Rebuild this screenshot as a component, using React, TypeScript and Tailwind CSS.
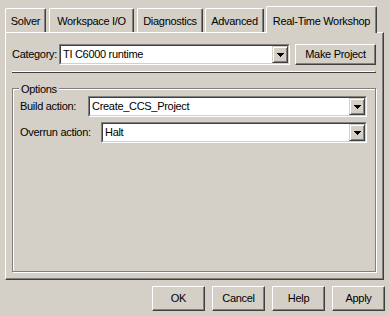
import React from 'react'

const TABS = [
  { label: 'Solver', w: 'w-[41px]', ml: 'ml-0' },
  { label: 'Workspace I/O', w: 'w-[85px]', ml: 'ml-[3px]' },
  { label: 'Diagnostics', w: 'w-[66px]', ml: 'ml-[3px]' },
  { label: 'Advanced', w: 'w-[59px]', ml: 'ml-[2px]' },
]

function Arrow() {
  return (
    <svg width="7" height="4" viewBox="0 0 7 4" shapeRendering="crispEdges">
      <path d="M0 0h7v1h-1v1h-1v1h-1v1h-1v-1h-1v-1h-1v-1h-1z" fill="#000" />
    </svg>
  )
}

function Combo({ value, className }: { value: string; className: string }) {
  return (
    <div className={`flex h-[21px] border border-t-[#808080] border-l-[#808080] border-b-white border-r-white ${className}`}>
      <div className="flex flex-1 border border-t-[#404040] border-l-[#404040] border-b-[#d4d0c8] border-r-[#d4d0c8] bg-white">
        <span className="flex-1 pl-[2px] leading-[17px] whitespace-nowrap overflow-hidden">{value}</span>
        <div className="flex w-[16px] items-center justify-center bg-[#d4d0c8] border border-t-[#d4d0c8] border-l-[#d4d0c8] border-b-[#404040] border-r-[#404040] shadow-[inset_1px_1px_#fff,inset_-1px_-1px_#808080]">
          <Arrow />
        </div>
      </div>
    </div>
  )
}

function Button({ label, className = '' }: { label: string; className?: string }) {
  return (
    <div className={`flex items-center justify-center bg-[#d4d0c8] border border-t-white border-l-white border-b-[#404040] border-r-[#404040] shadow-[inset_-1px_-1px_#808080] ${className}`}>
      {label}
    </div>
  )
}

export default function App() {
  return (
    <div className="w-[389px] h-[316px] bg-[#d4d0c8] text-black text-[11px] tracking-[-0.3px] font-['Liberation_Sans',Arial,sans-serif] overflow-hidden">
      {/* tabs */}
      <div className="flex items-end h-[32px] pl-[5px]">
        {TABS.map((t) => (
          <div key={t.label}
            className={`flex h-[24px] items-center justify-center pt-[1px] rounded-t-[2px] border-t border-l border-t-white border-l-white border-r border-r-[#404040] shadow-[inset_-1px_0_#808080] ${t.w} ${t.ml}`}>
            {t.label}
          </div>
        ))}
        <div className="relative z-10 -mb-px ml-[2px] flex h-[27px] w-[111px] items-start justify-center pt-[6px] bg-[#d4d0c8] rounded-t-[2px] border-t border-l border-t-white border-l-white border-r border-r-[#404040] shadow-[inset_-1px_0_#808080]">
          Real-Time Workshop
        </div>
      </div>

      {/* panel */}
      <div className="mx-[5px] h-[248px] border border-t-white border-l-white border-b-[#404040] border-r-[#404040] shadow-[inset_-1px_-1px_#808080] pl-[6px] pr-[7px] pt-[11px]">
        <div className="flex items-center h-[21px]">
          <span className="w-[47px] whitespace-nowrap">Category:</span>
          <Combo value="TI C6000 runtime" className="w-[231px]" />
          <Button label="Make Project" className="ml-auto w-[81px] h-[21px]" />
        </div>

        <div className="mt-[6px] h-[2px] border-t border-t-white border-b border-b-[#404040] border-r border-r-[#404040]" />

        <div className="relative mt-[15px] h-[184px] border border-[#808080] shadow-[inset_1px_1px_#fff,1px_1px_#fff] pl-[7px] pr-[8px] pt-[7px]">
          <span className="absolute -top-[8px] left-[6px] px-[2px] bg-[#d4d0c8]">Options</span>
          <div className="flex items-center">
            <span className="w-[68px] whitespace-nowrap">Build action:</span>
            <Combo value="Create_CCS_Project" className="flex-1" />
          </div>
          <div className="flex items-center mt-[5px]">
            <span className="w-[81px] whitespace-nowrap">Overrun action:</span>
            <Combo value="Halt" className="flex-1" />
          </div>
        </div>
      </div>

      {/* buttons */}
      <div className="flex justify-end gap-[7px] pr-[4px] mt-[6px]">
        {['OK', 'Cancel', 'Help', 'Apply'].map((b) => (
          <Button key={b} label={b} className="w-[53px] h-[25px]" />
        ))}
      </div>
    </div>
  )
}
